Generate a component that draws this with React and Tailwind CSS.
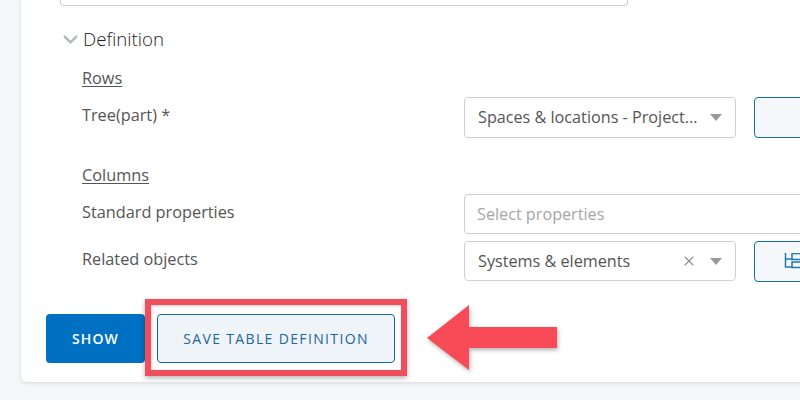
import React from "react";
import { ChevronDown, X } from "lucide-react";

const font = { fontFamily: '"Open Sans", sans-serif' };

const Caret = () => (
  <svg width="12" height="7" viewBox="0 0 12 7" className="shrink-0">
    <path d="M0 0h12L6 7z" fill="#9a9a9a" />
  </svg>
);

const TreeIcon = () => (
  <svg width="24" height="18" viewBox="0 0 24 18" fill="none" stroke="#1a78b4" strokeWidth="1.5" className="shrink-0">
    <path d="M1.5 0v14h6.5M1.5 6h6.5" />
    <rect x="8" y="0.5" width="12" height="6" />
    <rect x="8" y="9" width="12" height="5.5" />
  </svg>
);

const Row = ({ label, labelClass = "", children, className = "" }) => (
  <div className={`flex ${className}`}>
    <div className={`w-[382px] shrink-0 text-[16.3px] leading-[24px] text-[#555555] ${labelClass}`}>{label}</div>
    {children}
  </div>
);

const App = () => {
  return (
    <div style={font} className="relative h-[400px] w-[800px] overflow-hidden bg-[#f3f7f9] pl-[21px]">
      {/* card */}
      <div className="h-[382px] w-[800px] rounded-b-[6px] bg-white pl-[25px] shadow-[0_1px_4px_rgba(0,0,0,0.12)]">
        <div className="ml-[14px] h-[6px] w-[568px] rounded-b-[4px] border border-t-0 border-[#cfcfcf]" />

        <div className="mt-[21px] flex h-[24px] items-center">
          <ChevronDown size={23} strokeWidth={2.6} color="#b3b8bb" className="ml-[13px] shrink-0" />
          <span className="ml-[1px] text-[18.7px] font-light leading-[24px] text-[#222222]">Definition</span>
        </div>

        <div className="ml-[36px]">
          <div className="mt-[15px] text-[16.3px] leading-[24px] text-[#555555] underline underline-offset-2">Rows</div>

          <Row label="Tree(part) *" labelClass="pt-[11px]" className="mt-[2px]">
            <div className="mt-[5px] flex h-[41px] w-[272px] shrink-0 items-center justify-between rounded-[4px] border border-[#d0d0d0] bg-white pl-[13px] pr-[13px] text-[16.2px] text-[#555555]">
              <span>Spaces &amp; locations - Project...</span>
              <Caret />
            </div>
            <div className="ml-[18px] mt-[5px] h-[41px] w-[100px] shrink-0 rounded-[4px] border border-[#16709f] bg-[#f5f8fb]" />
          </Row>

          <div className="mt-[25px] text-[16.3px] leading-[24px] text-[#555555] underline underline-offset-2">Columns</div>

          <Row label="Standard properties" labelClass="pt-[6px]" className="mt-[7px]">
            <div className="flex h-[40px] w-[400px] shrink-0 items-center rounded-[4px] border border-[#d0d0d0] bg-white pl-[12px] text-[16.2px] text-[#a6a6a6]">
              Select properties
            </div>
          </Row>

          <Row label="Related objects" labelClass="pt-[6px]" className="mt-[7px]">
            <div className="flex h-[40px] w-[272px] shrink-0 items-center rounded-[4px] border border-[#d0d0d0] bg-white pl-[13px] pr-[13px] text-[16.2px] text-[#555555]">
              <span className="flex-1">Systems &amp; elements</span>
              <X size={16} strokeWidth={1.6} color="#8c8c8c" className="mr-[13px]" />
              <Caret />
            </div>
            <div className="ml-[18px] flex h-[41px] w-[100px] shrink-0 items-center rounded-[4px] border border-[#16709f] bg-[#f5f8fb] pl-[29px]">
              <TreeIcon />
            </div>
          </Row>
        </div>

        <div className="mt-[32px] flex">
          <button className="h-[49px] w-[99px] rounded-[4px] bg-[#0071c2] text-[14px] font-semibold tracking-[1.1px] text-white">SHOW</button>
          <button className="ml-[12px] h-[49px] w-[238px] rounded-[4px] border border-[#14689f] bg-[#eff4f9] text-[14px] font-medium tracking-[1.35px] text-[#1f659c]">SAVE TABLE DEFINITION</button>
        </div>
      </div>

      {/* annotation */}
      <div className="absolute left-[145px] top-[299px] h-[77px] w-[262px] border-[6px] border-[#ef4f5c] shadow-[0_2px_5px_rgba(0,0,0,0.3),inset_1px_1px_3px_rgba(0,0,0,0.2)]" />
      <svg width="140" height="75" viewBox="0 0 140 75" className="absolute left-[424px] top-[302px]">
        <path d="M3 36 45 3v22h88v21H45v22z" fill="#f94b57" style={{ filter: "drop-shadow(1px 2px 2px rgba(0,0,0,0.3))" }} />
      </svg>
    </div>
  );
};

export default App;
